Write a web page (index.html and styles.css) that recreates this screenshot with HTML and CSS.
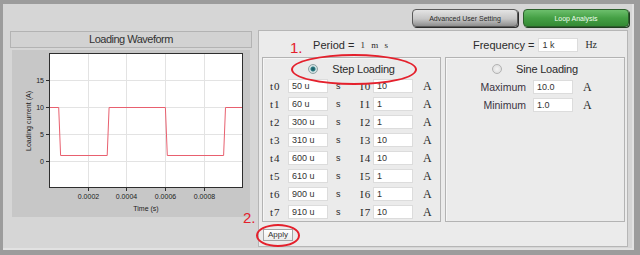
FILE: index.html
```html
<!DOCTYPE html>
<html lang="en">
<head>
    <meta charset="UTF-8">
    <title>Loading Waveform</title>
    <link rel="stylesheet" href="styles.css">
</head>
<body>
    <div class="frame">
        <div class="toolbar">
            <button class="tab-button tab-gray">Advanced User Setting</button>
            <button class="tab-button tab-green">Loop Analysis</button>
        </div>

        <div class="main">
            <div class="wave-panel">
                <div class="wave-title">Loading Waveform</div>
                <div class="chart-box">
                    <svg class="chart" width="238" height="167" viewBox="0 0 238 167">
                        <rect x="37" y="3" width="194" height="135" fill="#fff"/>
                        <g stroke="#e3e3e3" stroke-width="1">
                            <line x1="76.5" y1="4" x2="76.5" y2="138"/>
                            <line x1="114.5" y1="4" x2="114.5" y2="138"/>
                            <line x1="153.5" y1="4" x2="153.5" y2="138"/>
                            <line x1="192.5" y1="4" x2="192.5" y2="138"/>
                            <line x1="38" y1="30.5" x2="231" y2="30.5"/>
                            <line x1="38" y1="57.5" x2="231" y2="57.5"/>
                            <line x1="38" y1="84.5" x2="231" y2="84.5"/>
                            <line x1="38" y1="111.5" x2="231" y2="111.5"/>
                        </g>
                        <polyline fill="none" stroke="#e8606f" stroke-width="1"
                            points="38,57.5 46.7,57.5 48.6,105.5 95.2,105.5 97.1,57.5 153.4,57.5 155.3,105.5 211.6,105.5 213.5,57.5 231,57.5"/>
                        <rect x="37.5" y="3.5" width="193" height="134" fill="none" stroke="#2e2e2e"/>
                        <g stroke="#2e2e2e" stroke-width="1">
                            <line x1="34" y1="30.5" x2="37" y2="30.5"/>
                            <line x1="34" y1="57.5" x2="37" y2="57.5"/>
                            <line x1="34" y1="84.5" x2="37" y2="84.5"/>
                            <line x1="34" y1="111.5" x2="37" y2="111.5"/>
                            <line x1="76.5" y1="138" x2="76.5" y2="141"/>
                            <line x1="114.5" y1="138" x2="114.5" y2="141"/>
                            <line x1="153.5" y1="138" x2="153.5" y2="141"/>
                            <line x1="192.5" y1="138" x2="192.5" y2="141"/>
                        </g>
                        <g class="tick-label" text-anchor="end">
                            <text x="32" y="33">15</text>
                            <text x="32" y="60">10</text>
                            <text x="32" y="87">5</text>
                            <text x="32" y="114">0</text>
                        </g>
                        <g class="tick-label" text-anchor="middle">
                            <text x="76.5" y="149">0.0002</text>
                            <text x="114.5" y="149">0.0004</text>
                            <text x="153.5" y="149">0.0006</text>
                            <text x="192.5" y="149">0.0008</text>
                            <text x="134" y="161">Time (s)</text>
                        </g>
                        <text class="tick-label" text-anchor="middle" transform="translate(19 71) rotate(-90)">Loading current (A)</text>
                    </svg>
                </div>
            </div>

            <div class="setup-panel">
                <div class="setup-head">
                    <div class="head-cell">Period = <span class="serif unit">1 m s</span></div>
                    <div class="head-cell">
                        Frequency =
                        <input class="field" type="text" value="1 k">
                        <span class="serif hz">Hz</span>
                    </div>
                </div>

                <div class="modes">
                    <div class="mode-box">
                        <div class="mode-title"><span class="radio checked"></span>Step Loading</div>
                        <div class="step-grid">
                            <span class="serif lbl">t0</span><input class="field" value="50 u"><span class="sec">s</span><span class="serif lbl">I0</span><input class="field" value="10"><span class="serif amp">A</span>
                            <span class="serif lbl">t1</span><input class="field" value="60 u"><span class="sec">s</span><span class="serif lbl">I1</span><input class="field" value="1"><span class="serif amp">A</span>
                            <span class="serif lbl">t2</span><input class="field" value="300 u"><span class="sec">s</span><span class="serif lbl">I2</span><input class="field" value="1"><span class="serif amp">A</span>
                            <span class="serif lbl">t3</span><input class="field" value="310 u"><span class="sec">s</span><span class="serif lbl">I3</span><input class="field" value="10"><span class="serif amp">A</span>
                            <span class="serif lbl">t4</span><input class="field" value="600 u"><span class="sec">s</span><span class="serif lbl">I4</span><input class="field" value="10"><span class="serif amp">A</span>
                            <span class="serif lbl">t5</span><input class="field" value="610 u"><span class="sec">s</span><span class="serif lbl">I5</span><input class="field" value="1"><span class="serif amp">A</span>
                            <span class="serif lbl">t6</span><input class="field" value="900 u"><span class="sec">s</span><span class="serif lbl">I6</span><input class="field" value="1"><span class="serif amp">A</span>
                            <span class="serif lbl">t7</span><input class="field" value="910 u"><span class="sec">s</span><span class="serif lbl">I7</span><input class="field" value="10"><span class="serif amp">A</span>
                        </div>
                    </div>
                    <div class="mode-box">
                        <div class="mode-title"><span class="radio"></span>Sine Loading</div>
                        <div class="sine-grid">
                            <span class="sine-lbl">Maximum</span><input class="field" value="10.0"><span class="serif amp">A</span>
                            <span class="sine-lbl">Minimum</span><input class="field" value="1.0"><span class="serif amp">A</span>
                        </div>
                    </div>
                </div>

                <div class="apply-row">
                    <button class="apply-button">Apply</button>
                </div>
            </div>
        </div>
    </div>

    <!-- tutorial markers drawn over the form -->
    <span class="mark mark-one">1.</span>
    <span class="ring ring-one"></span>
    <span class="mark mark-two">2.</span>
    <span class="ring ring-two"></span>
</body>
</html>
```

FILE: styles.css
```css
body {
    margin: 0;
    width: 640px;
    height: 255px;
    position: relative;
    overflow: hidden;
    font-family: "Liberation Sans", Arial, sans-serif;
    background-color: #9c9c9c;
    color: #2a2a2a;
}

.frame {
    box-sizing: border-box;
    width: 640px;
    height: 255px;
    border-style: solid;
    border-color: #9c9c9c;
    border-width: 4px 6px 5px 3px;
    background-color: #d6d6d6;
    box-shadow: inset -2px -2px 0 #e2e2e2;
    display: flex;
    flex-direction: column;
}

.serif {
    font-family: "Liberation Serif", "Times New Roman", serif;
}

/* top buttons */
.toolbar {
    display: flex;
    justify-content: flex-end;
    gap: 5px;
    padding: 5px 5px 0 0;
}

.tab-button {
    box-sizing: border-box;
    width: 106px;
    height: 18px;
    padding: 0;
    border-radius: 4px;
    font-family: "Liberation Sans", Arial, sans-serif;
    font-size: 7px;
    cursor: pointer;
}

.tab-gray {
    color: #2a2a2a;
    border: 1px solid #5a5a5a;
    background: linear-gradient(#e4e4e4, #c6c6c6 55%, #8e8e8e);
    box-shadow: 1px 1px 0 #2c2c2c;
}

.tab-green {
    color: #f2fff2;
    border: 1px solid #2c5f2c;
    background: linear-gradient(#6cbf6c, #45a045 50%, #348a34);
    box-shadow: 1px 1px 0 #1f3f1f;
}

.main {
    display: flex;
    gap: 6px;
    padding: 3px 6px 3px 7px;
    flex: 1;
}

/* waveform side */
.wave-panel {
    width: 242px;
    display: flex;
    flex-direction: column;
}

.wave-title {
    box-sizing: border-box;
    height: 17px;
    margin-top: 1px;
    border: 1px solid #b3b3b3;
    background-color: #d2d2d2;
    text-align: center;
    font-size: 11px;
    letter-spacing: -0.5px;
    line-height: 15px;
    color: #333;
}

.chart-box {
    margin: 2px 2px 0 2px;
    height: 167px;
    background-color: #c7c7c7;
}

.chart {
    display: block;
}

.tick-label {
    font-family: "Liberation Sans", Arial, sans-serif;
    font-size: 7px;
    fill: #222;
}

/* settings side */
.setup-panel {
    box-sizing: border-box;
    width: 370px;
    height: 217px;
    border: 1px solid #b6b6b6;
    background-color: #ebebeb;
    padding: 0 2px 0 3px;
}

.setup-head {
    display: grid;
    grid-template-columns: 179px 180px;
    column-gap: 4px;
    height: 26px;
}

.head-cell {
    display: flex;
    align-items: center;
    justify-content: center;
    gap: 4px;
    font-size: 11px;
    padding-top: 1px;
}

.unit {
    font-size: 9px;
    letter-spacing: 2px;
    margin-left: 2px;
}

.hz {
    font-size: 10px;
    margin-left: 3px;
}

.modes {
    display: grid;
    grid-template-columns: 179px 180px;
    column-gap: 4px;
}

.mode-box {
    box-sizing: border-box;
    height: 165px;
    border: 1px solid #b3b3b3;
    box-shadow: inset 1px 1px 0 #f6f6f6;
}

.mode-title {
    display: flex;
    align-items: center;
    justify-content: center;
    gap: 14px;
    height: 13px;
    padding: 4px 0 0 0;
    font-size: 11px;
    letter-spacing: -0.2px;
}

.radio {
    box-sizing: border-box;
    width: 10px;
    height: 10px;
    border-radius: 50%;
    border: 1px solid #b2b2b2;
    background: radial-gradient(circle, #f4f4f4, #d8d8d8);
}

.radio.checked {
    border-color: #8fa3a5;
    background: radial-gradient(circle, #17565e 0, #2a7a82 2px, #d7e6e7 3px, #c4d4d5 5px);
}

.field {
    box-sizing: border-box;
    width: 40px;
    height: 14px;
    margin: 0;
    padding: 0 3px;
    border: 1px solid #dcdcdc;
    background-color: #fff;
    font-family: "Liberation Sans", Arial, sans-serif;
    font-size: 9px;
    color: #333;
    outline: none;
}

.step-grid {
    display: grid;
    grid-template-columns: 18px 40px 32px 13px 40px auto;
    grid-auto-rows: 18px;
    align-items: center;
    padding: 2px 0 0 7px;
}

.lbl {
    font-size: 11px;
    letter-spacing: 1px;
}

.sec {
    font-size: 9px;
    padding-left: 8px;
}

.amp {
    font-size: 12px;
    padding-left: 10px;
}

.sine-grid {
    display: grid;
    grid-template-columns: 80px 40px auto;
    grid-auto-rows: 18px;
    column-gap: 7px;
    align-items: center;
    padding-top: 3px;
}

.sine-grid .amp {
    padding-left: 3px;
}

.sine-lbl {
    text-align: right;
    font-size: 10.5px;
    color: #3a3342;
}

.apply-row {
    display: flex;
    padding: 7px 0 0 1px;
}

.apply-button {
    box-sizing: border-box;
    width: 30px;
    height: 12px;
    padding: 0;
    border: 1px solid #a5a5a5;
    background: linear-gradient(#ffffff, #ececec);
    font-family: "Liberation Sans", Arial, sans-serif;
    font-size: 8px;
    line-height: 10px;
    color: #333;
    cursor: pointer;
}

/* red tutorial annotations */
.mark {
    position: absolute;
    font-size: 15px;
    line-height: 15px;
    color: #e4202c;
}

.mark-one {
    left: 290px;
    top: 40px;
}

.mark-two {
    left: 243px;
    top: 210px;
}

.ring {
    position: absolute;
    box-sizing: border-box;
    border: 2px solid #e4202c;
    border-radius: 50%;
}

.ring-one {
    left: 291px;
    top: 54px;
    width: 126px;
    height: 31px;
}

.ring-two {
    left: 256px;
    top: 224px;
    width: 44px;
    height: 23px;
}
```
